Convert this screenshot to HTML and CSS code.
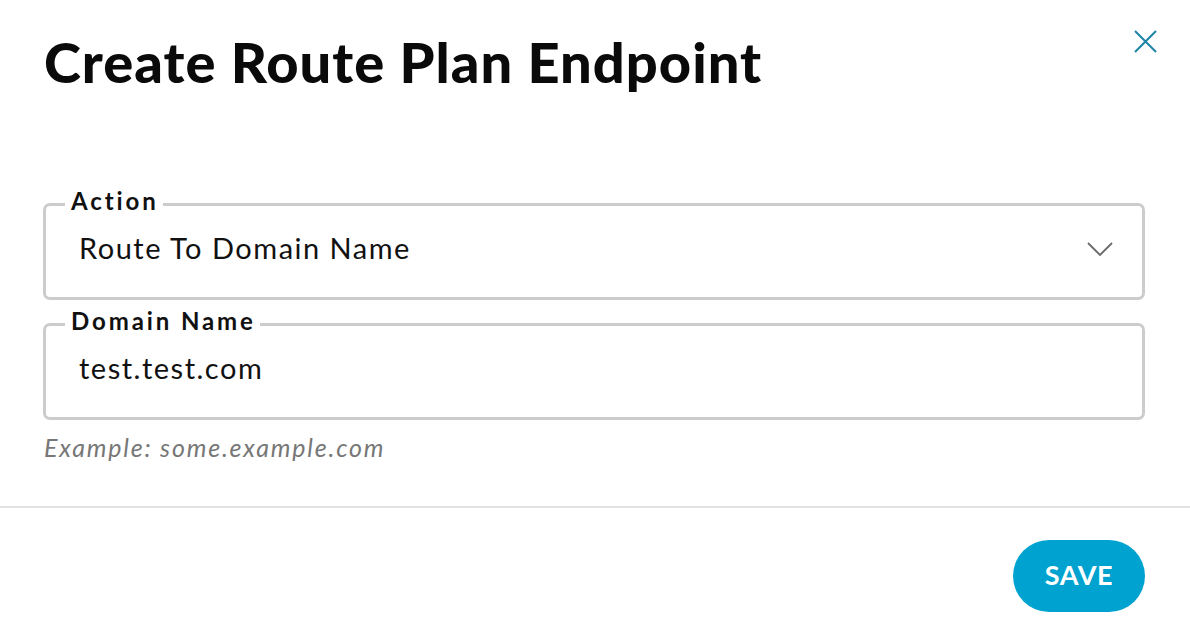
FILE: index.html
```html
<!DOCTYPE html>
<html lang="en">
<head>
<meta charset="utf-8">
<title>Create Route Plan Endpoint</title>
<link rel="stylesheet" href="styles.css">
</head>
<body>
<div class="modal">
  <header class="modal-header">
    <h1 class="modal-title">Create Route Plan Endpoint</h1>
    <button class="close-btn" aria-label="Close">
      <svg width="23" height="23" viewBox="0 0 23 23"><path d="M1 1 L22 22 M22 1 L1 22" stroke="currentColor" stroke-width="2" fill="none"/></svg>
    </button>
  </header>
  <form class="modal-body">
    <fieldset class="field">
      <legend class="field-label">Action</legend>
      <div class="field-control">
        <span class="field-value">Route To Domain Name</span>
        <svg class="chevron" width="26" height="15" viewBox="0 0 26 15"><path d="M1 1 L13 13 L25 1" stroke="currentColor" stroke-width="1.8" fill="none"/></svg>
      </div>
    </fieldset>
    <fieldset class="field">
      <legend class="field-label">Domain Name</legend>
      <div class="field-control">
        <span class="field-value">test.test.com</span>
      </div>
    </fieldset>
    <p class="helper">Example: some.example.com</p>
  </form>
  <footer class="modal-footer">
    <button class="save-btn" type="button">SAVE</button>
  </footer>
</div>
</body>
</html>
```
FILE: styles.css
```css
* { box-sizing: border-box; }
html, body { margin: 0; padding: 0; background: #fff; }
body { font-family: Lato, "Liberation Sans", sans-serif; color: #151515; }

.modal { width: 1190px; height: 642px; display: flex; flex-direction: column; }

.modal-header {
  display: flex;
  justify-content: space-between;
  align-items: flex-start;
  padding: 30px 33px 0 44px;
}
.modal-title {
  margin: 0;
  font-size: 56px;
  line-height: 64px;
  font-weight: 900;
  letter-spacing: 1px;
  color: #0a0a0a;
}
.close-btn {
  border: 0;
  background: none;
  padding: 0;
  color: #1d84a6;
  width: 23px;
  height: 23px;
  cursor: pointer;
}

.modal-body {
  padding: 0 45px 0 43px;
  margin-top: 93px;
  display: flex;
  flex-direction: column;
  gap: 7px;
}
.field {
  margin: 0;
  padding: 0;
  border: 3px solid #cccccc;
  border-radius: 7px;
  min-width: 0;
}
.field-label {
  margin-left: 19px;
  padding: 0 4px 7px 6px;
  font-size: 24px;
  line-height: 28px;
  font-weight: 700;
  letter-spacing: 2.9px;
  color: #111;
}
.field-control {
  display: flex;
  align-items: flex-start;
  justify-content: space-between;
  height: 75px;
  padding: 10px 29px 0 33px;
}
.field-value {
  font-size: 29px;
  line-height: 32px;
  letter-spacing: 1.5px;
  color: #111;
}
.chevron { color: #6a6a6a; margin-top: 10px; }

.helper {
  margin: 6px 0 0 1px;
  font-size: 25px;
  line-height: 28px;
  font-style: italic;
  color: #777;
  letter-spacing: 1.8px;
}

.modal-footer {
  margin-top: auto;
  border-top: 2px solid #e2e2e2;
  height: 136px;
  display: flex;
  justify-content: flex-end;
  align-items: flex-start;
  padding: 32px 45px 0 0;
}
.save-btn {
  width: 132px;
  height: 72px;
  padding: 0 0 3px;
  border: 0;
  border-radius: 36px;
  background: #00a3cf;
  color: #fff;
  font-family: Lato, "Liberation Sans", sans-serif;
  font-size: 27px;
  font-weight: 700;
  letter-spacing: 0.6px;
  cursor: pointer;
}
```
